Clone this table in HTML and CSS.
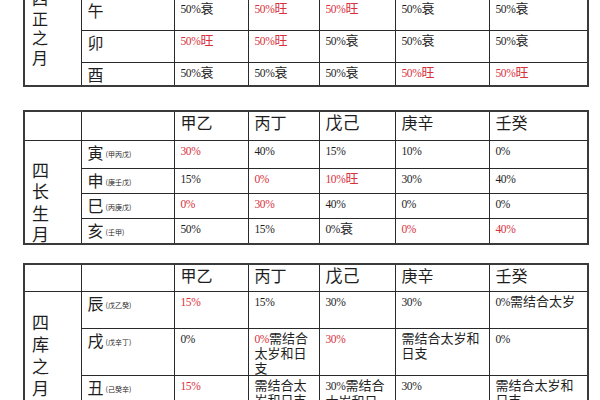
FILE: index.html
```html
<!DOCTYPE html>
<html lang="zh">
<head>
<meta charset="utf-8">
<title>四正 四长生 四库</title>
<link rel="stylesheet" href="styles.css">
</head>
<body>
<div class="sheet">
  <table class="grid first">
    <colgroup><col class="c1"><col class="c2"><col class="c3"><col class="c4"><col class="c5"><col class="c6"><col class="c7"></colgroup>
    <tr class="r-zi">
      <td class="side side1" rowspan="4"><div class="vt">四<br>正<br>之<br>月</div></td>
      <td class="lbl">子</td>
      <td class="red"><span class="n">50%</span>旺</td>
      <td><span class="n">50%</span>衰</td>
      <td><span class="n">50%</span>衰</td>
      <td><span class="n">50%</span>衰</td>
      <td class="red"><span class="n">50%</span>旺</td>
    </tr>
    <tr class="r-wu">
      <td class="lbl">午</td>
      <td><span class="n">50%</span>衰</td>
      <td class="red"><span class="n">50%</span>旺</td>
      <td class="red"><span class="n">50%</span>旺</td>
      <td><span class="n">50%</span>衰</td>
      <td><span class="n">50%</span>衰</td>
    </tr>
    <tr class="r-mao">
      <td class="lbl">卯</td>
      <td class="red"><span class="n">50%</span>旺</td>
      <td class="red"><span class="n">50%</span>旺</td>
      <td><span class="n">50%</span>衰</td>
      <td><span class="n">50%</span>衰</td>
      <td><span class="n">50%</span>衰</td>
    </tr>
    <tr class="r-you">
      <td class="lbl">酉</td>
      <td><span class="n">50%</span>衰</td>
      <td><span class="n">50%</span>衰</td>
      <td><span class="n">50%</span>衰</td>
      <td class="red"><span class="n">50%</span>旺</td>
      <td class="red"><span class="n">50%</span>旺</td>
    </tr>
  </table>

  <table class="grid second">
    <colgroup><col class="c1"><col class="c2"><col class="c3"><col class="c4"><col class="c5"><col class="c6"><col class="c7"></colgroup>
    <tr class="head h2">
      <td></td><td></td>
      <td>甲乙</td><td>丙丁</td><td class="big">戊己</td><td>庚辛</td><td>壬癸</td>
    </tr>
    <tr class="r-yin">
      <td class="side side2" rowspan="4"><div class="vt">四<br>长<br>生<br>月</div></td>
      <td class="lbl">寅<small class="note">(甲丙戊)</small></td>
      <td class="red"><span class="n">30%</span></td>
      <td><span class="n">40%</span></td>
      <td><span class="n">15%</span></td>
      <td><span class="n">10%</span></td>
      <td><span class="n">0%</span></td>
    </tr>
    <tr class="r-shen">
      <td class="lbl">申<small class="note">(庚壬戊)</small></td>
      <td><span class="n">15%</span></td>
      <td class="red"><span class="n">0%</span></td>
      <td class="red"><span class="n">10%</span>旺</td>
      <td><span class="n">30%</span></td>
      <td><span class="n">40%</span></td>
    </tr>
    <tr class="r-si">
      <td class="lbl">巳<small class="note">(丙庚戊)</small></td>
      <td class="red"><span class="n">0%</span></td>
      <td class="red"><span class="n">30%</span></td>
      <td><span class="n">40%</span></td>
      <td><span class="n">0%</span></td>
      <td><span class="n">0%</span></td>
    </tr>
    <tr class="r-hai">
      <td class="lbl">亥<small class="note">(壬甲)</small></td>
      <td><span class="n">50%</span></td>
      <td><span class="n">15%</span></td>
      <td><span class="n">0%</span>衰</td>
      <td class="red"><span class="n">0%</span></td>
      <td class="red"><span class="n">40%</span></td>
    </tr>
  </table>

  <table class="grid third">
    <colgroup><col class="c1"><col class="c2"><col class="c3"><col class="c4"><col class="c5"><col class="c6"><col class="c7"></colgroup>
    <tr class="head h3">
      <td></td><td></td>
      <td>甲乙</td><td>丙丁</td><td class="big">戊己</td><td>庚辛</td><td>壬癸</td>
    </tr>
    <tr class="r-chen">
      <td class="side side3" rowspan="3"><div class="vt">四<br>库<br>之<br>月</div></td>
      <td class="lbl">辰<small class="note">(戊乙癸)</small></td>
      <td class="red"><span class="n">15%</span></td>
      <td><span class="n">15%</span></td>
      <td><span class="n">30%</span></td>
      <td><span class="n">30%</span></td>
      <td><span class="n">0%</span>需结合太岁</td>
    </tr>
    <tr class="r-xu">
      <td class="lbl">戌<small class="note">(戊辛丁)</small></td>
      <td><span class="n">0%</span></td>
      <td><span class="n red">0%</span>需结合太岁和日支</td>
      <td class="red"><span class="n">30%</span></td>
      <td>需结合太岁和日支</td>
      <td><span class="n">0%</span></td>
    </tr>
    <tr class="r-chou">
      <td class="lbl">丑<small class="note">(己癸辛)</small></td>
      <td class="red"><span class="n">15%</span></td>
      <td>需结合太岁和日支</td>
      <td><span class="n">30%</span>需结合太岁和日支</td>
      <td><span class="n">30%</span></td>
      <td>需结合太岁和日支</td>
    </tr>
  </table>
</div>
</body>
</html>
```

FILE: styles.css
```css
html, body {
  margin: 0;
  padding: 0;
  background: #ffffff;
}
body {
  font-family: "Liberation Serif", "Noto Sans CJK SC", serif;
  color: #1e1e1e;
  overflow: hidden;
}
.sheet {
  padding-left: 23px;
  display: flex;
  flex-direction: column;
  align-items: flex-start;
}
.grid {
  border-collapse: collapse;
  table-layout: fixed;
  width: 564px;
  border: 2px solid #3a3a3a;
}
.first { margin-top: -35px; }
.second { margin-top: 23px; }
.third { margin-top: 18px; }

.c1 { width: 57px; }
.c2 { width: 93px; }
.c3 { width: 74px; }
.c4 { width: 71px; }
.c5 { width: 76px; }
.c6 { width: 94px; }
.c7 { width: 99px; }

.grid td {
  box-sizing: border-box;
  border: 1px solid #2a2a2a;
  padding: 1px 6px 0 6px;
  vertical-align: top;
  font-size: 13px;
  line-height: 15px;
  font-family: "Noto Sans CJK SC", sans-serif;
  font-weight: 400;
  word-break: break-all;
}
.grid td.red, .grid .red { color: #d8313b; }
.n {
  font-family: "Liberation Serif", serif;
  font-size: 11.5px;
  line-height: 1;
  letter-spacing: -0.4px;
}

.grid td.lbl {
  font-size: 16px;
  line-height: 20px;
  padding-top: 1px;
  padding-left: 6px;
}
.note {
  font-size: 7px;
  line-height: 7px;
  margin-left: 2px;
  vertical-align: 2px;
}
.grid td.side {
  padding: 0 0 0 7px;
  font-size: 17px;
  line-height: 22px;
}
.grid td.side1 {
  font-size: 16px;
  line-height: 19.5px;
  padding-top: 22px;
}
.grid td.side2 { padding-top: 18px; line-height: 21.5px; }
.grid td.side2 .vt { margin-bottom: -8px; }
.grid td.side3 { padding-top: 19px; }

.head td {
  font-size: 16px;
  line-height: 20px;
  padding-top: 0;
}
.head td.big { font-size: 17px; }

.r-zi td, .r-wu td { height: 32px; }
.r-mao td { height: 32px; }
.r-you td { height: 24px; }

.h2 td { height: 29px; }
.r-yin td { height: 28px; }
.r-shen td { height: 25px; }
.r-si td { height: 25px; }
.r-hai td { height: 26px; }

.h3 td { height: 27px; }
.r-chen td { height: 37px; }
.r-xu td { height: 46px; }
.r-chou td { height: 52px; }

.grid td.side { height: auto; }
```
